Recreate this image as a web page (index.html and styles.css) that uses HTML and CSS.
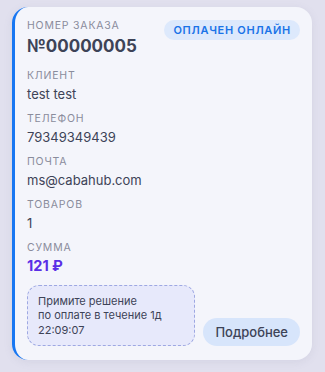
FILE: index.html
```html
<!DOCTYPE html>
<html lang="ru">
<head>
<meta charset="utf-8">
<link rel="stylesheet" href="styles.css">
</head>
<body>
<div class="card">
  <div class="head">
    <div class="field">
      <div class="label">Номер заказа</div>
      <div class="order">№00000005</div>
    </div>
    <span class="badge">Оплачен онлайн</span>
  </div>
  <div class="field">
    <div class="label">Клиент</div>
    <div class="value">test test</div>
  </div>
  <div class="field">
    <div class="label">Телефон</div>
    <div class="value">79349349439</div>
  </div>
  <div class="field">
    <div class="label">Почта</div>
    <div class="value">ms@cabahub.com</div>
  </div>
  <div class="field">
    <div class="label">Товаров</div>
    <div class="value">1</div>
  </div>
  <div class="field">
    <div class="label">Сумма</div>
    <div class="sum">121 ₽</div>
  </div>
  <div class="foot">
    <div class="notice">Примите решение<br>по оплате в течение 1д<br>22:09:07</div>
    <button class="more">Подробнее</button>
  </div>
</div>
</body>
</html>
```
FILE: styles.css
```css
html, body { margin: 0; }
body {
  background: #e1e0ee;
  padding: 7px 13px 12px 12px;
  font-family: Inter, "Noto Sans", sans-serif;
  color: #3d4357;
}
.card {
  background: #f4f5fb;
  border-left: 3px solid #1877f2;
  border-radius: 16px;
  height: 353px;
  box-sizing: border-box;
  padding: 12px 12px 14px 12px;
  display: flex;
  flex-direction: column;
  gap: 9px;
  box-shadow: 0 2px 8px rgba(120, 120, 160, 0.12);
}
.head {
  display: flex;
  justify-content: space-between;
  align-items: flex-start;
  margin-bottom: 2px;
}
.field { display: flex; flex-direction: column; gap: 2px; }
.label {
  font-size: 10.5px;
  line-height: 14px;
  text-transform: uppercase;
  letter-spacing: 0.8px;
  color: #8a8c9c;
}
.order {
  font-size: 17px;
  line-height: 23px;
  font-weight: 700;
  color: #3d4357;
}
.value {
  font-size: 13px;
  line-height: 18px;
  color: #3d4357;
}
.sum {
  font-size: 14.5px;
  line-height: 18px;
  font-weight: 700;
  color: #5a2ee6;
}
.badge {
  background: #dde9fc;
  color: #1a73e8;
  font-size: 11px;
  font-weight: 600;
  letter-spacing: 0.7px;
  text-transform: uppercase;
  padding: 3px 9px;
  line-height: 14px;
  border-radius: 999px;
  margin-top: 1px;
}
.foot {
  margin-top: auto;
  display: flex;
  justify-content: space-between;
  align-items: flex-end;
}
.notice {
  width: 168px;
  box-sizing: border-box;
  background: #e7e9fb;
  border: 1px dashed #9ea8e2;
  border-radius: 12px;
  padding: 8px 10px;
  font-size: 11px;
  line-height: 14.5px;
  color: #3d4357;
}
.more {
  border: none;
  background: #d7e5fb;
  color: #3d4357;
  font-family: inherit;
  font-size: 13px;
  font-weight: 500;
  padding: 0 12px;
  height: 28px;
  border-radius: 14px;
}
```
